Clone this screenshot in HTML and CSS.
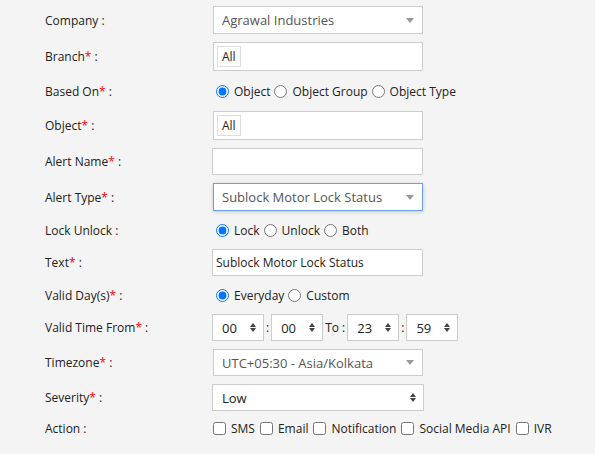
FILE: index.html
```html
<!DOCTYPE html>
<html lang="en">
<head>
    <meta charset="UTF-8">
    <title>Alert</title>
    <link rel="stylesheet" href="styles.css">
</head>
<body>
    <form class="alert-form">
        <div class="form-row">
            <label class="form-label">Company :</label>
            <div class="select select-plain first">
                <span class="select-text">Agrawal Industries</span>
                <span class="caret"></span>
            </div>
        </div>

        <div class="form-row">
            <label class="form-label">Branch<span class="req">*</span> :</label>
            <div class="tag-box"><span class="tag">All</span></div>
        </div>

        <div class="form-row choice-row tall">
            <label class="form-label">Based On<span class="req">*</span> :</label>
            <div class="choices">
                <label><input type="radio" name="based" checked>Object</label>
                <label><input type="radio" name="based">Object Group</label>
                <label><input type="radio" name="based">Object Type</label>
            </div>
        </div>

        <div class="form-row">
            <label class="form-label">Object<span class="req">*</span> :</label>
            <div class="tag-box"><span class="tag">All</span></div>
        </div>

        <div class="form-row">
            <label class="form-label">Alert Name<span class="req">*</span> :</label>
            <input type="text" class="text-input">
        </div>

        <div class="form-row">
            <label class="form-label">Alert Type<span class="req">*</span> :</label>
            <div class="select select-plain focused">
                <span class="select-text">Sublock Motor Lock Status</span>
                <span class="caret"></span>
            </div>
        </div>

        <div class="form-row choice-row">
            <label class="form-label">Lock Unlock :</label>
            <div class="choices">
                <label><input type="radio" name="lock" checked>Lock</label>
                <label><input type="radio" name="lock">Unlock</label>
                <label><input type="radio" name="lock">Both</label>
            </div>
        </div>

        <div class="form-row">
            <label class="form-label">Text<span class="req">*</span> :</label>
            <input type="text" class="text-input" value="Sublock Motor Lock Status">
        </div>

        <div class="form-row choice-row">
            <label class="form-label">Valid Day(s)<span class="req">*</span> :</label>
            <div class="choices">
                <label><input type="radio" name="day" checked>Everyday</label>
                <label><input type="radio" name="day">Custom</label>
            </div>
        </div>

        <div class="form-row">
            <label class="form-label">Valid Time From<span class="req">*</span> :</label>
            <div class="time-group">
                <div class="spin-box"><span>00</span><span class="updown"></span></div>
                <span class="sep">:</span>
                <div class="spin-box"><span>00</span><span class="updown"></span></div>
                <span class="sep">To :</span>
                <div class="spin-box"><span>23</span><span class="updown"></span></div>
                <span class="sep">:</span>
                <div class="spin-box"><span>59</span><span class="updown"></span></div>
            </div>
        </div>

        <div class="form-row">
            <label class="form-label">Timezone<span class="req">*</span> :</label>
            <div class="select select-plain">
                <span class="select-text">UTC+05:30 - Asia/Kolkata</span>
                <span class="caret"></span>
            </div>
        </div>

        <div class="form-row">
            <label class="form-label">Severity<span class="req">*</span> :</label>
            <div class="select select-native">
                <span class="select-text">Low</span>
                <span class="updown"></span>
            </div>
        </div>

        <div class="form-row check-row">
            <label class="form-label">Action :</label>
            <div class="checks">
                <label><input type="checkbox">SMS</label>
                <label><input type="checkbox">Email</label>
                <label><input type="checkbox">Notification</label>
                <label><input type="checkbox">Social Media API</label>
                <label><input type="checkbox">IVR</label>
            </div>
        </div>
    </form>
</body>
</html>
```

FILE: styles.css
```css
body {
    margin: 0;
    background-color: #f4f4f4;
    font-family: 'Open Sans', 'Noto Sans', sans-serif;
    font-size: 12px;
    color: #222;
}
.alert-form {
    padding: 6px 0 0 45px;
}
.form-row {
    display: flex;
    align-items: center;
    margin-bottom: 8px;
}
.form-label {
    width: 168px;
    flex: none;
}
.req {
    color: #f00;
}
.choice-row {
    height: 22px;
}
.choice-row.tall {
    height: 24px;
}
.check-row {
    height: 18px;
}
.select,
.tag-box,
.text-input,
.spin-box {
    box-sizing: border-box;
    background: #fff;
    border: 1px solid #ccc;
}
.select {
    width: 210px;
    height: 27px;
    display: flex;
    align-items: center;
    justify-content: space-between;
    padding: 0 8px 0 8px;
    font-size: 13px;
}
.select.first {
    height: 28px;
}
.select-plain .select-text {
    color: #555;
}
.select.focused {
    height: 28px;
    border-color: #6a9ff0;
    box-shadow: 0 1px 4px rgba(0,0,0,0.18);
}
.caret {
    width: 0;
    height: 0;
    border-left: 4px solid transparent;
    border-right: 4px solid transparent;
    border-top: 5px solid #999;
}
.updown {
    display: flex;
    flex-direction: column;
    gap: 1px;
}
.updown::before,
.updown::after {
    content: '';
    width: 0;
    height: 0;
    border-left: 3px solid transparent;
    border-right: 3px solid transparent;
}
.updown::before {
    border-bottom: 4px solid #444;
}
.updown::after {
    border-top: 4px solid #444;
}
.select-native {
    width: 212px;
    margin-left: -1px;
    padding-left: 9px;
    padding-right: 7px;
    color: #222;
}
.tag-box {
    width: 210px;
    height: 29px;
    padding: 3px 3px;
}
.tag {
    display: inline-block;
    box-sizing: border-box;
    height: 21px;
    line-height: 19px;
    padding: 0 4px;
    border: 1px solid #ddd;
    background: #fff;
}
.text-input {
    width: 211px;
    height: 27px;
    margin-left: -1px;
    padding: 0 3px;
    font-family: inherit;
    font-size: 12px;
    color: #222;
    outline: none;
}
.choices,
.checks {
    display: flex;
    align-items: center;
}
.choices {
    margin-left: -1px;
}
.choices label,
.checks label {
    display: inline-flex;
    align-items: center;
}
.choices input {
    margin: 0 5px 0 4px;
}
.checks input {
    margin: 0 5px 0 0;
}
.checks label {
    margin-right: 5px;
}
.time-group {
    display: flex;
    align-items: center;
    margin-left: -1px;
}
.spin-box {
    width: 52px;
    height: 27px;
    display: flex;
    align-items: center;
    justify-content: space-between;
    padding: 0 7px 0 9px;
    font-size: 13px;
}
.sep {
    padding: 0 2px;
}
```
